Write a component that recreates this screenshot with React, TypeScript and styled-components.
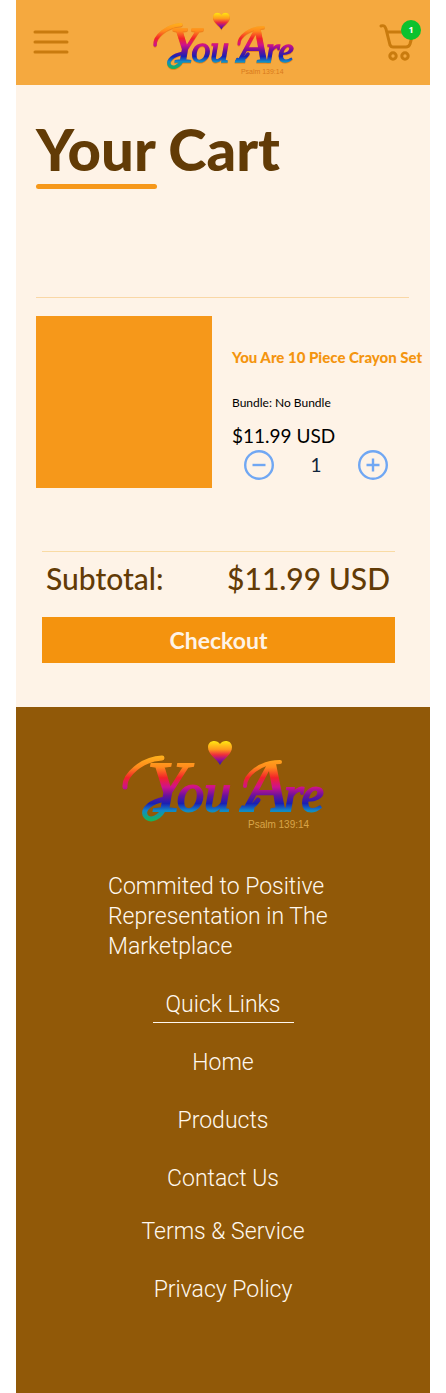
import React, { useId, useState } from "react";
import styled, { createGlobalStyle } from "styled-components";

const GlobalStyle = createGlobalStyle`
  *, *::before, *::after { box-sizing: border-box; }
  body { margin: 0; background: #ffffff; font-family: "Lato", "Open Sans", sans-serif; font-variant-ligatures: none; }
  h1, h2, p, ul { margin: 0; padding: 0; }
  button { font: inherit; cursor: pointer; }
`;

const Page = styled.div`
  padding: 0 16px;
`;

const Header = styled.header`
  display: grid;
  grid-template-columns: 1fr auto 1fr;
  align-items: center;
  height: 85px;
  padding: 0 9px 2px;
  background: #f5a93f;
`;

const IconButton = styled.button<{ $end?: boolean }>`
  position: relative;
  display: block;
  justify-self: ${(p) => (p.$end ? "end" : "start")};
  margin-left: ${(p) => (p.$end ? 0 : "7px")};
  padding: 0;
  border: 0;
  background: none;
  color: #c97b0e;

  svg { display: block; }
`;

const Badge = styled.span`
  position: absolute;
  top: -2px;
  right: 0;
  width: 20px;
  border-radius: 50%;
  background: #0cc22e;
  color: #ffffff;
  font: bold 9px/20px "Noto Sans", sans-serif;
  text-align: center;
`;

const LogoLink = styled.a`
  display: block;
  padding-top: 4px;

  svg { display: block; }
`;

const Main = styled.main`
  padding: 32px 21px 44px 20px;
  background: #fef3e7;
`;

const Title = styled.h1`
  color: #623b06;
  font-size: 58px;
  font-weight: 900;
  line-height: 64px;

  &::after {
    content: "";
    display: block;
    width: 121px;
    height: 5px;
    margin-top: 3px;
    border-radius: 3px;
    background: #f6981a;
  }
`;

const Item = styled.article`
  display: flex;
  gap: 20px;
  margin-top: 108px;
  padding-top: 18px;
  border-top: 1px solid #f9d7a6;
`;

const Thumbnail = styled.div`
  flex: 0 0 176px;
  height: 172px;
  background: #f6981a;
`;

const Details = styled.div`
  flex: 1;
  min-width: 0;
  padding-top: 31px;
`;

const ItemName = styled.h2`
  color: #f4950f;
  font-size: 15px;
  font-weight: 900;
  line-height: 20px;
  white-space: nowrap;
`;

const Bundle = styled.p`
  margin-top: 28px;
  font-size: 12px;
  line-height: 16px;
`;

const Price = styled.p`
  margin-top: 12px;
  font-size: 19px;
  line-height: 26px;
`;

const Stepper = styled.div`
  display: flex;
  align-items: center;
  justify-content: space-between;
  width: 144px;
  margin: 1px 0 0 12px;
`;

const StepButton = styled.button`
  padding: 0;
  border: 0;
  background: none;
  color: #70a7f3;

  svg { display: block; }
`;

const Quantity = styled.output`
  color: #10243a;
  font-size: 19px;
  line-height: 30px;
`;

const Summary = styled.section`
  margin: 63px 14px 0 6px;
  border-top: 1px solid #f9dba4;
`;

const Subtotal = styled.div`
  display: flex;
  justify-content: space-between;
  padding: 6px 5px 19px 4px;
  color: #623b06;
  font-size: 30px;
  font-weight: 500;
  line-height: 40px;
`;

const Checkout = styled.button`
  display: block;
  width: 100%;
  height: 46px;
  border: 0;
  background: #f4930e;
  color: #fef3e7;
  font-size: 23px;
  font-weight: 700;
`;

const Footer = styled.footer`
  display: flex;
  flex-direction: column;
  align-items: center;
  padding: 33px 20px 88px;
  background: #915908;
  color: #fff8ef;
  font-family: "Roboto", "Lato", sans-serif;
  font-size: 23px;
  font-weight: 300;
  line-height: 30px;
`;

const Tagline = styled.p`
  width: 230px;
  margin-top: 42px;
`;

const QuickLinks = styled.h2`
  width: 141px;
  margin-top: 28px;
  padding-bottom: 2px;
  border-bottom: 1px solid #fff8ef;
  font-size: 23px;
  font-weight: 300;
  text-align: center;
`;

const LinkList = styled.ul`
  display: flex;
  flex-direction: column;
  align-items: center;
  gap: 28px;
  margin-top: 25px;
  list-style: none;
`;

const LegalList = styled(LinkList)`
  margin-top: 23px;
`;

const FooterLink = styled.a`
  color: inherit;
  text-decoration: none;
`;

function Logo({ width, height, glow }: { width: number; height: number; glow?: boolean }) {
  const id = useId();
  const ink = `${id}ink`;
  const heart = `${id}heart`;
  return (
    <svg
      width={width}
      height={height}
      viewBox="0 0 202 90"
      role="img"
      aria-label="You Are, Psalm 139:14"
      overflow="visible"
    >
      <defs>
        <linearGradient id={ink} gradientUnits="userSpaceOnUse" x1="0" y1="14" x2="0" y2="80">
          <stop offset="0" stopColor="#ffb91c" />
          <stop offset="0.2" stopColor="#ff8a1c" />
          <stop offset="0.36" stopColor="#f3222a" />
          <stop offset="0.5" stopColor="#cf128c" />
          <stop offset="0.63" stopColor="#6a129c" />
          <stop offset="0.75" stopColor="#1a20b4" />
          <stop offset="0.86" stopColor="#118ac8" />
          <stop offset="1" stopColor="#17b35c" />
        </linearGradient>
        <linearGradient id={heart} x1="0" y1="0" x2="0" y2="1">
          <stop offset="0" stopColor="#ffe812" />
          <stop offset="0.35" stopColor="#ff9a1c" />
          <stop offset="0.58" stopColor="#ee2c3c" />
          <stop offset="0.75" stopColor="#a3128c" />
          <stop offset="1" stopColor="#2118b8" />
        </linearGradient>
      </defs>
      <g style={glow ? { filter: "drop-shadow(0 1px 1px #e8750f)" } : undefined}>
        <path
          d="M98 25C95 19 86 15 86 7C86 0 95-1 98 4C101-1 110 0 110 7C110 15 101 19 98 25Z"
          fill={`url(#${heart})`}
        />
        <g fill="none" stroke={`url(#${ink})`} strokeLinecap="round">
          <path strokeWidth="5" d="M3 47C2 35 20 19 40 18" />
          <path strokeWidth="5" d="M43 66C39 78 27 83 23 75C21 69 28 62 43 59" />
          <path strokeWidth="4" d="M123 46C123 35 138 22 158 22" />
          <path strokeWidth="5" d="M121 68C126 71 131 67 136 60" />
        </g>
        <g
          fill={`url(#${ink})`}
          stroke={`url(#${ink})`}
          strokeWidth="2"
          fontFamily="'Liberation Serif', serif"
          fontStyle="italic"
        >
          <text y="71">
            <tspan x="25" fontSize="72">Y</tspan>
            <tspan x="55" fontSize="54">ou</tspan>
          </text>
          <text y="71">
            <tspan x="122" fontSize="72">A</tspan>
            <tspan x="162" fontSize="50">re</tspan>
          </text>
        </g>
      </g>
      <text
        x="126"
        y="88"
        fill={glow ? "#d9791c" : "#d9a548"}
        fontFamily="'Liberation Sans Narrow', 'Liberation Sans', sans-serif"
        fontSize="10"
      >
        Psalm 139:14
      </text>
    </svg>
  );
}

function StepIcon({ plus }: { plus?: boolean }) {
  return (
    <svg width="30" height="30" viewBox="0 0 30 30" fill="none" stroke="currentColor" strokeWidth="2.400" aria-hidden="true">
      <circle cx="15" cy="15" r="13.800" />
      <path d={plus ? "M8.500 15h13M15 8.500v13" : "M8.500 15h13"} />
    </svg>
  );
}

export default function App() {
  const [quantity, setQuantity] = useState(1);
  const total = `$${(11.99 * quantity).toFixed(2)} USD`;

  return (
    <Page>
      <GlobalStyle />
      <Header>
        <IconButton aria-label="Open menu">
          <svg width="38" height="26" viewBox="0 0 38 26" stroke="currentColor" strokeWidth="3" strokeLinecap="round">
            <path d="M3 3h32M3 13h32M3 23h32" />
          </svg>
        </IconButton>
        <LogoLink href="#">
          <Logo width={141} height={63} glow />
        </LogoLink>
        <IconButton $end aria-label={`Cart, ${quantity} item`}>
          <svg width="44" height="40" viewBox="0 0 44 40" fill="none" stroke="currentColor" strokeWidth="3" strokeLinecap="round" strokeLinejoin="round">
            <path d="M4 4C7 3 8 4 9 7L13 23Q14 25 16 25H29Q32 25 33 22L36 11M10 10H34" />
            <circle cx="16" cy="34" r="3.200" />
            <circle cx="28" cy="34" r="3.200" />
          </svg>
          <Badge>{quantity}</Badge>
        </IconButton>
      </Header>

      <Main>
        <Title>Your Cart</Title>
        <Item>
          <Thumbnail />
          <Details>
            <ItemName>You Are 10 Piece Crayon Set</ItemName>
            <Bundle>Bundle: No Bundle</Bundle>
            <Price>$11.99 USD</Price>
            <Stepper>
              <StepButton aria-label="Decrease quantity" onClick={() => setQuantity(Math.max(1, quantity - 1))}>
                <StepIcon />
              </StepButton>
              <Quantity>{quantity}</Quantity>
              <StepButton aria-label="Increase quantity" onClick={() => setQuantity(quantity + 1)}>
                <StepIcon plus />
              </StepButton>
            </Stepper>
          </Details>
        </Item>
        <Summary>
          <Subtotal>
            <span>Subtotal:</span>
            <span>{total}</span>
          </Subtotal>
          <Checkout>Checkout</Checkout>
        </Summary>
      </Main>

      <Footer>
        <Logo width={202} height={90} />
        <Tagline>Commited to Positive Representation in The Marketplace</Tagline>
        <QuickLinks>Quick Links</QuickLinks>
        <LinkList>
          <li><FooterLink href="#">Home</FooterLink></li>
          <li><FooterLink href="#">Products</FooterLink></li>
          <li><FooterLink href="#">Contact Us</FooterLink></li>
        </LinkList>
        <LegalList>
          <li><FooterLink href="#">Terms &amp; Service</FooterLink></li>
          <li><FooterLink href="#">Privacy Policy</FooterLink></li>
        </LegalList>
      </Footer>
    </Page>
  );
}
